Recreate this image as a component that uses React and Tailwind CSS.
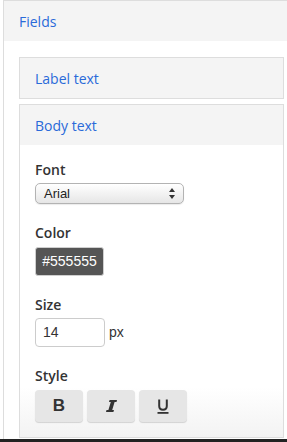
import { useState } from "react";

const sans = "font-['Open_Sans',sans-serif]";
const arial = "font-['Liberation_Sans',Arial,sans-serif]";

function SelectBox() {
  return (
    <div className="mt-[3px] flex h-[21px] w-[149px] items-center justify-between rounded-[5px] border border-[#b3b3b3] bg-gradient-to-b from-white to-[#e6e6e6] pl-[8px] pr-[8px] shadow-[0_1px_1px_rgba(0,0,0,0.08)]">
      <span className={`${arial} text-[13px] text-[#222]`}>Arial</span>
      <svg width="6" height="11" viewBox="0 0 6 11">
        <path d="M3 0 L6 4 L0 4 Z M3 11 L6 7 L0 7 Z" fill="#333" />
      </svg>
    </div>
  );
}

function StyleButton({ children }) {
  return (
    <button className="flex h-[32px] w-[48px] items-center justify-center rounded-[4px] bg-[#e6e6e6] shadow-[0_1px_1px_rgba(0,0,0,0.15)]">
      {children}
    </button>
  );
}

function Label({ children }) {
  return <div className={`${sans} text-[14px] font-semibold leading-[20px] text-[#333]`}>{children}</div>;
}

export default function App() {
  const [size] = useState("14");
  return (
    <div className="flex h-[442px] w-[287px] flex-col overflow-hidden bg-white">
      <div className="ml-[3px] w-[296px] flex-1 border border-b-0 border-[#dddddd]">
        <div className={`${sans} flex h-[40px] items-center bg-[#f4f4f4] px-[15px] text-[14px] text-[#2a6ad9]`}>
          Fields
        </div>
        <div className="flex flex-col gap-[5px] pl-[15px] pt-[16px]">
          <div className={`${sans} flex h-[42px] w-[265px] items-center border border-[#dddddd] bg-[#f4f4f4] px-[15px] text-[14px] text-[#2a6ad9]`}>
            Label text
          </div>
          <div className="w-[265px] border border-[#dddddd] bg-gradient-to-b from-white from-85% to-[#f3f3f3]">
            <div className={`${sans} flex h-[40px] items-center bg-[#f4f4f4] px-[15px] text-[14px] text-[#2a6ad9]`}>
              Body text
            </div>
            <div className="px-[15px] pb-[15px] pt-[15px]">
              <Label>Font</Label>
              <SelectBox />

              <div className="mt-[19px]">
                <Label>Color</Label>
                <div className={`${arial} mt-[4px] flex h-[29px] w-[69px] items-center justify-center rounded-[3px] border border-[#cfcfcf] bg-[#555555] text-[14px] text-white`}>
                  #555555
                </div>
              </div>

              <div className="mt-[19px]">
                <Label>Size</Label>
                <div className="mt-[3px] flex items-center gap-[4px]">
                  <div className={`${arial} flex h-[29px] w-[70px] items-center rounded-[4px] border border-[#cccccc] bg-white px-[7px] text-[14px] text-[#333]`}>
                    {size}
                  </div>
                  <span className={`${arial} text-[14px] text-[#333]`}>px</span>
                </div>
              </div>

              <div className="mt-[19px]">
                <Label>Style</Label>
                <div className="mt-[4px] flex gap-[4px]">
                  <StyleButton>
                    <span className={`${arial} text-[17px] font-bold text-[#333]`}>B</span>
                  </StyleButton>
                  <StyleButton>
                    <svg width="11" height="12" viewBox="0 0 11 12">
                      <path d="M3.6 0 H11 L10.5 2 H8.6 L6.2 10 H8 L7.4 12 H0 L0.5 10 H2.4 L4.8 2 H3 Z" fill="#333" />
                    </svg>
                  </StyleButton>
                  <StyleButton>
                    <svg width="12" height="15" viewBox="0 0 12 15">
                      <path d="M2.2 0.5 V7 Q2.2 10.8 6 10.8 Q9.8 10.8 9.8 7 V0.5" fill="none" stroke="#333" strokeWidth="2" />
                      <rect x="0.5" y="13" width="11" height="1.8" fill="#333" />
                    </svg>
                  </StyleButton>
                </div>
              </div>
            </div>
          </div>
        </div>
      </div>
      <div className="h-[3px] bg-[#222]" />
    </div>
  );
}
